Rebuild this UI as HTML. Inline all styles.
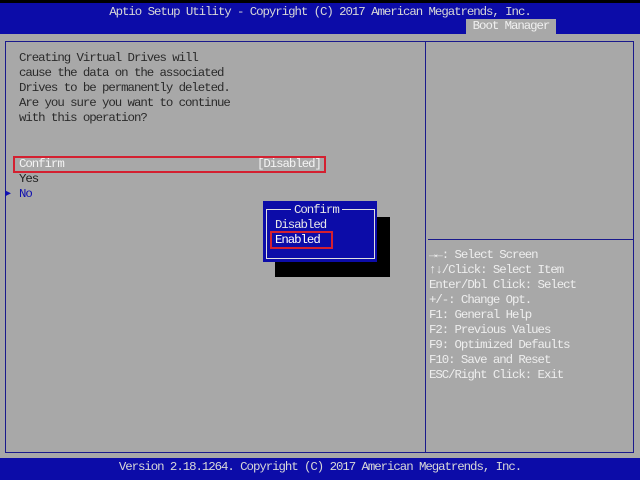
<!DOCTYPE html>
<html><head><style>
body{margin:0;width:640px;height:480px;background:#a8a8a8;position:relative;overflow:hidden;font-family:"Liberation Mono",monospace;font-size:12.4px;letter-spacing:-1.05px;color:#ececec}
div,span{position:absolute;white-space:pre;line-height:15px}
</style></head><body>
<div style="left:0;top:0;width:640px;height:34px;background:#0c0ca8"></div>
<div style="left:0;top:0;width:640px;height:3px;background:#000"></div>
<div style="left:0;top:5px;width:640px;text-align:center;color:#d8d8d8">Aptio Setup Utility - Copyright (C) 2017 American Megatrends, Inc.</div>
<div style="left:466px;top:19px;width:90px;height:15px;background:#a8a8a8;color:#f0f0f0;text-align:center">Boot Manager</div>
<div style="left:5px;top:41px;width:627px;height:410px;border:1px solid #1a1a8c"></div>
<div style="left:425px;top:42px;width:1px;height:410px;background:#1a1a8c"></div>
<div style="left:428px;top:239px;width:205px;height:1px;background:#1a1a8c"></div>
<div style="left:19px;top:51px;color:#2a2a2a">Creating Virtual Drives will
cause the data on the associated
Drives to be permanently deleted.
Are you sure you want to continue
with this operation?</div>
<div style="left:13px;top:156px;width:309px;height:13px;border:2px solid #d42030"></div>
<div style="left:19px;top:157px;color:#f4f4f4">Confirm</div>
<div style="left:257px;top:157px;color:#f4f4f4">[Disabled]</div>
<div style="left:19px;top:172px;color:#202020">Yes</div>
<div style="left:5px;top:187px;color:#1010b0;font-size:10px">▶</div>
<div style="left:19px;top:187px;color:#1010b0">No</div>
<div style="left:275px;top:217px;width:115px;height:60px;background:#000"></div>
<div style="left:263px;top:201px;width:114px;height:61px;background:#0c0ca8"></div>
<div style="left:266px;top:209px;width:107px;height:48px;border:1px solid #e0e0e0"></div>
<div style="left:291px;top:203px;background:#0c0ca8;color:#e8e8e8;padding:0 3px">Confirm</div>
<div style="left:275px;top:218px;color:#e8e8e8">Disabled</div>
<div style="left:270px;top:231px;width:59px;height:14px;border:2px solid #d42030"></div>
<div style="left:275px;top:233px;color:#fff">Enabled</div>
<div style="left:429px;top:248px;color:#eeeeee">→←: Select Screen
↑↓/Click: Select Item
Enter/Dbl Click: Select
+/-: Change Opt.
F1: General Help
F2: Previous Values
F9: Optimized Defaults
F10: Save and Reset
ESC/Right Click: Exit</div>
<div style="left:0;top:458px;width:640px;height:22px;background:#0c0ca8"></div>
<div style="left:0;top:460px;width:640px;text-align:center;color:#d8d8d8">Version 2.18.1264. Copyright (C) 2017 American Megatrends, Inc.</div>
</body></html>
